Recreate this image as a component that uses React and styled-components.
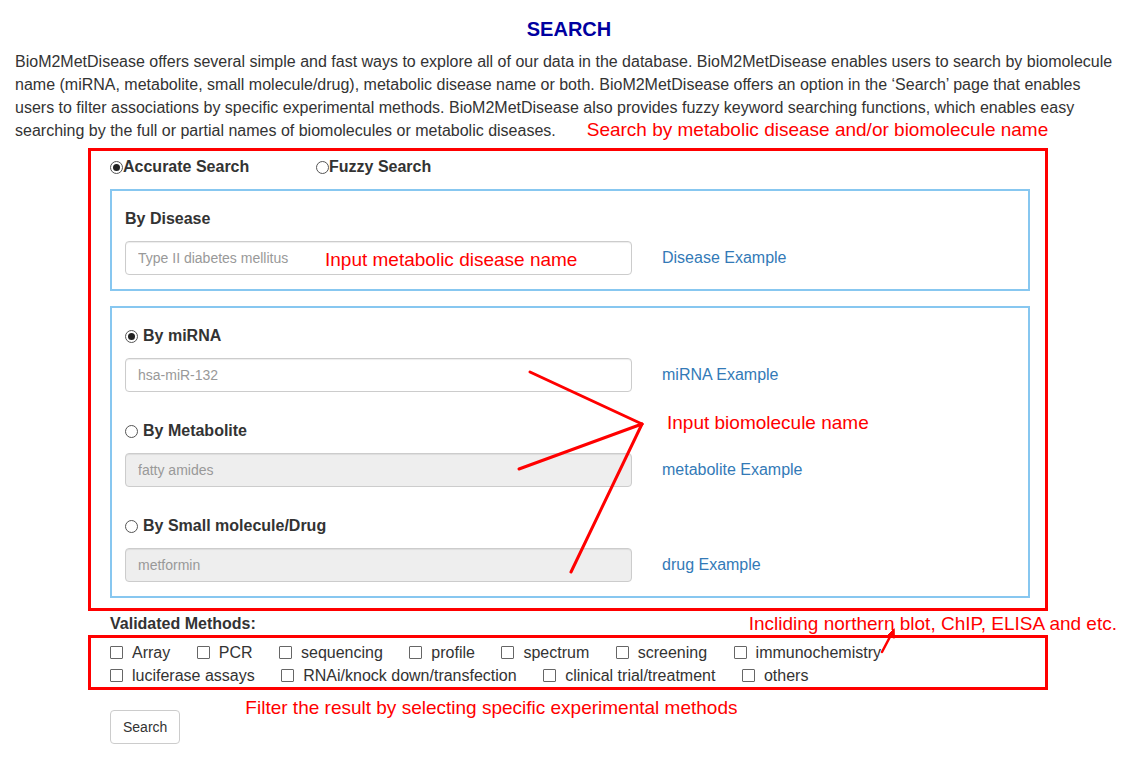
import React from 'react';
import styled, { createGlobalStyle } from 'styled-components';

const GlobalStyle = createGlobalStyle`
  body {
    margin: 0;
    background: #fff;
    color: #333;
    font-family: "Liberation Sans", Arial, sans-serif;
  }
`;

const Page = styled.div`
  padding: 0 15px;
`;

const Title = styled.h3`
  margin: 18px 0 10px;
  text-align: center;
  font-size: 20px;
  line-height: 22px;
  font-weight: bold;
  color: #0000a0;
`;

const Intro = styled.p`
  margin: 0;
  font-size: 16px;
  line-height: 23px;
`;

const Note = styled.span`
  color: #ff0000;
  font-size: 19px;
  line-height: 22px;
  margin-left: ${(props) => props.$offset || 0}px;
  white-space: nowrap;
`;

const OverNote = styled(Note)`
  position: absolute;
  left: ${(props) => props.$left}px;
  top: ${(props) => props.$top}px;
  margin: 0;
  pointer-events: none;
`;

const OutlineBox = styled.div`
  position: relative;
  box-sizing: border-box;
  width: 960px;
  margin: ${(props) => props.$top || 0}px 0 0 73px;
  border: 3px solid #ff0000;
  padding: ${(props) => props.$pad};
`;

const ModeRow = styled.div`
  display: flex;
  align-items: center;
  height: 22px;
  font-size: 16px;
  font-weight: bold;
`;

const ModeOption = styled.label`
  display: flex;
  align-items: center;
  width: ${(props) => props.$width || 'auto'};
`;

const Radio = styled.span`
  position: relative;
  display: inline-block;
  box-sizing: border-box;
  width: 13px;
  height: 13px;
  border: 1px solid #555;
  border-radius: 50%;
  background: #fff;
  margin-right: ${(props) => props.$gap || 0}px;
  flex: none;

  &::after {
    content: '';
    display: ${(props) => (props.$checked ? 'block' : 'none')};
    position: absolute;
    left: 2px;
    top: 2px;
    width: 7px;
    height: 7px;
    border-radius: 50%;
    background: #222;
  }
`;

const Panel = styled.div`
  position: relative;
  margin-top: ${(props) => props.$top}px;
  border: 2px solid #87c7f0;
  padding: 17px 13px 14px;
`;

const FieldGroup = styled.div`
  & + & {
    margin-top: 28px;
  }
`;

const FieldLabel = styled.div`
  display: flex;
  align-items: center;
  font-size: 16px;
  font-weight: bold;
  line-height: 22px;
`;

const InputRow = styled.div`
  position: relative;
  display: flex;
  align-items: center;
  margin-top: 11px;
`;

const TextInput = styled.input`
  box-sizing: border-box;
  width: 507px;
  height: 34px;
  padding: 6px 12px;
  border: 1px solid #ccc;
  border-radius: 4px;
  background: ${(props) => (props.disabled ? '#eee' : '#fff')};
  box-shadow: inset 0 1px 1px rgba(0, 0, 0, 0.075);
  font-family: inherit;
  font-size: 14px;
  color: #555;

  &::placeholder {
    color: #999;
  }
`;

const ExampleLink = styled.a`
  margin-left: 30px;
  color: #337ab7;
  font-size: 16px;
  text-decoration: none;
`;

const Pointers = styled.svg`
  position: absolute;
  left: 0;
  top: 0;
  overflow: visible;
  pointer-events: none;
`;

const MethodsHeader = styled.div`
  display: flex;
  align-items: center;
  margin: 2px 6px 0 95px;
  line-height: 22px;
`;

const MethodsLabel = styled.span`
  font-size: 16px;
  font-weight: bold;
`;

const MethodRow = styled.div`
  display: flex;
  font-size: 16px;
  line-height: 23px;
`;

const MethodItem = styled.label`
  display: flex;
  align-items: center;
  margin-right: 26.5px;
`;

const Checkbox = styled.span`
  display: inline-block;
  box-sizing: border-box;
  width: 13px;
  height: 13px;
  margin-right: 9px;
  border: 1px solid #666;
  border-radius: 1px;
  background: #fff;
`;

const ActionRow = styled.div`
  display: flex;
  align-items: flex-start;
  margin-left: 95px;
`;

const SearchButton = styled.button`
  margin-top: 20px;
  padding: 6px 12px;
  border: 1px solid #ccc;
  border-radius: 4px;
  background: #fff;
  color: #333;
  font-family: inherit;
  font-size: 14px;
  line-height: 20px;
`;

const FilterNote = styled(Note)`
  margin: 8px 0 0 65px;
  line-height: 20px;
`;

const molecules = [
  { label: 'By miRNA', placeholder: 'hsa-miR-132', link: 'miRNA Example', checked: true },
  { label: 'By Metabolite', placeholder: 'fatty amides', link: 'metabolite Example' },
  { label: 'By Small molecule/Drug', placeholder: 'metformin', link: 'drug Example' },
];

const methodRows = [
  ['Array', 'PCR', 'sequencing', 'profile', 'spectrum', 'screening', 'immunochemistry'],
  ['luciferase assays', 'RNAi/knock down/transfection', 'clinical trial/treatment', 'others'],
];

export default function App() {
  return (
    <Page>
      <GlobalStyle />
      <Title>SEARCH</Title>
      <Intro>
        BioM2MetDisease offers several simple and fast ways to explore all of our data in the
        database. BioM2MetDisease enables users to search by biomolecule name (miRNA, metabolite,
        small molecule/drug), metabolic disease name or both. BioM2MetDisease offers an option in
        the ‘Search’ page that enables users to filter associations by specific experimental
        methods. BioM2MetDisease also provides fuzzy keyword searching functions, which enables
        easy searching by the full or partial names of biomolecules or metabolic diseases.
        <Note $offset={31}>Search by metabolic disease and/or biomolecule name</Note>
      </Intro>

      <OutlineBox $top={6} $pad="5px 15px 10px 19px">
        <ModeRow>
          <ModeOption $width="206px">
            <Radio $checked />
            Accurate Search
          </ModeOption>
          <ModeOption>
            <Radio />
            Fuzzy Search
          </ModeOption>
        </ModeRow>

        <Panel $top={11}>
          <FieldGroup>
            <FieldLabel>By Disease</FieldLabel>
            <InputRow>
              <TextInput placeholder="Type II diabetes mellitus" />
              <OverNote $left={200} $top={8}>Input metabolic disease name</OverNote>
              <ExampleLink href="#">Disease Example</ExampleLink>
            </InputRow>
          </FieldGroup>
        </Panel>

        <Panel $top={15}>
          {molecules.map((m) => (
            <FieldGroup key={m.label}>
              <FieldLabel>
                <Radio $checked={m.checked} $gap={5} />
                {m.label}
              </FieldLabel>
              <InputRow>
                <TextInput placeholder={m.placeholder} disabled={!m.checked} />
                <ExampleLink href="#">{m.link}</ExampleLink>
              </InputRow>
            </FieldGroup>
          ))}
          <Pointers width="920" height="290">
            <g stroke="#ff0000" strokeWidth="3" strokeLinecap="round" fill="none">
              <line x1="418" y1="64" x2="530" y2="116" />
              <line x1="407" y1="161" x2="530" y2="116" />
              <line x1="459" y1="264" x2="530" y2="116" />
            </g>
          </Pointers>
          <OverNote $left={555} $top={104}>Input biomolecule name</OverNote>
        </Panel>
      </OutlineBox>

      <MethodsHeader>
        <MethodsLabel>Validated Methods:</MethodsLabel>
        <Note style={{ marginLeft: 'auto' }}>Incliding northern blot, ChIP, ELISA and etc.</Note>
      </MethodsHeader>

      <OutlineBox $pad="3px 0 0 19px">
        {methodRows.map((row, i) => (
          <MethodRow key={i}>
            {row.map((name) => (
              <MethodItem key={name}>
                <Checkbox />
                {name}
              </MethodItem>
            ))}
          </MethodRow>
        ))}
        <Pointers width="30" height="30">
          <g stroke="#ff0000" strokeWidth="2.5" fill="#ff0000" strokeLinecap="round">
            <line x1="791" y1="14" x2="801" y2="-5" />
            <polygon points="803,-9 796,-2 803,0" strokeWidth="1" />
          </g>
        </Pointers>
      </OutlineBox>

      <ActionRow>
        <SearchButton>Search</SearchButton>
        <FilterNote>Filter the result by selecting specific experimental methods</FilterNote>
      </ActionRow>
    </Page>
  );
}
